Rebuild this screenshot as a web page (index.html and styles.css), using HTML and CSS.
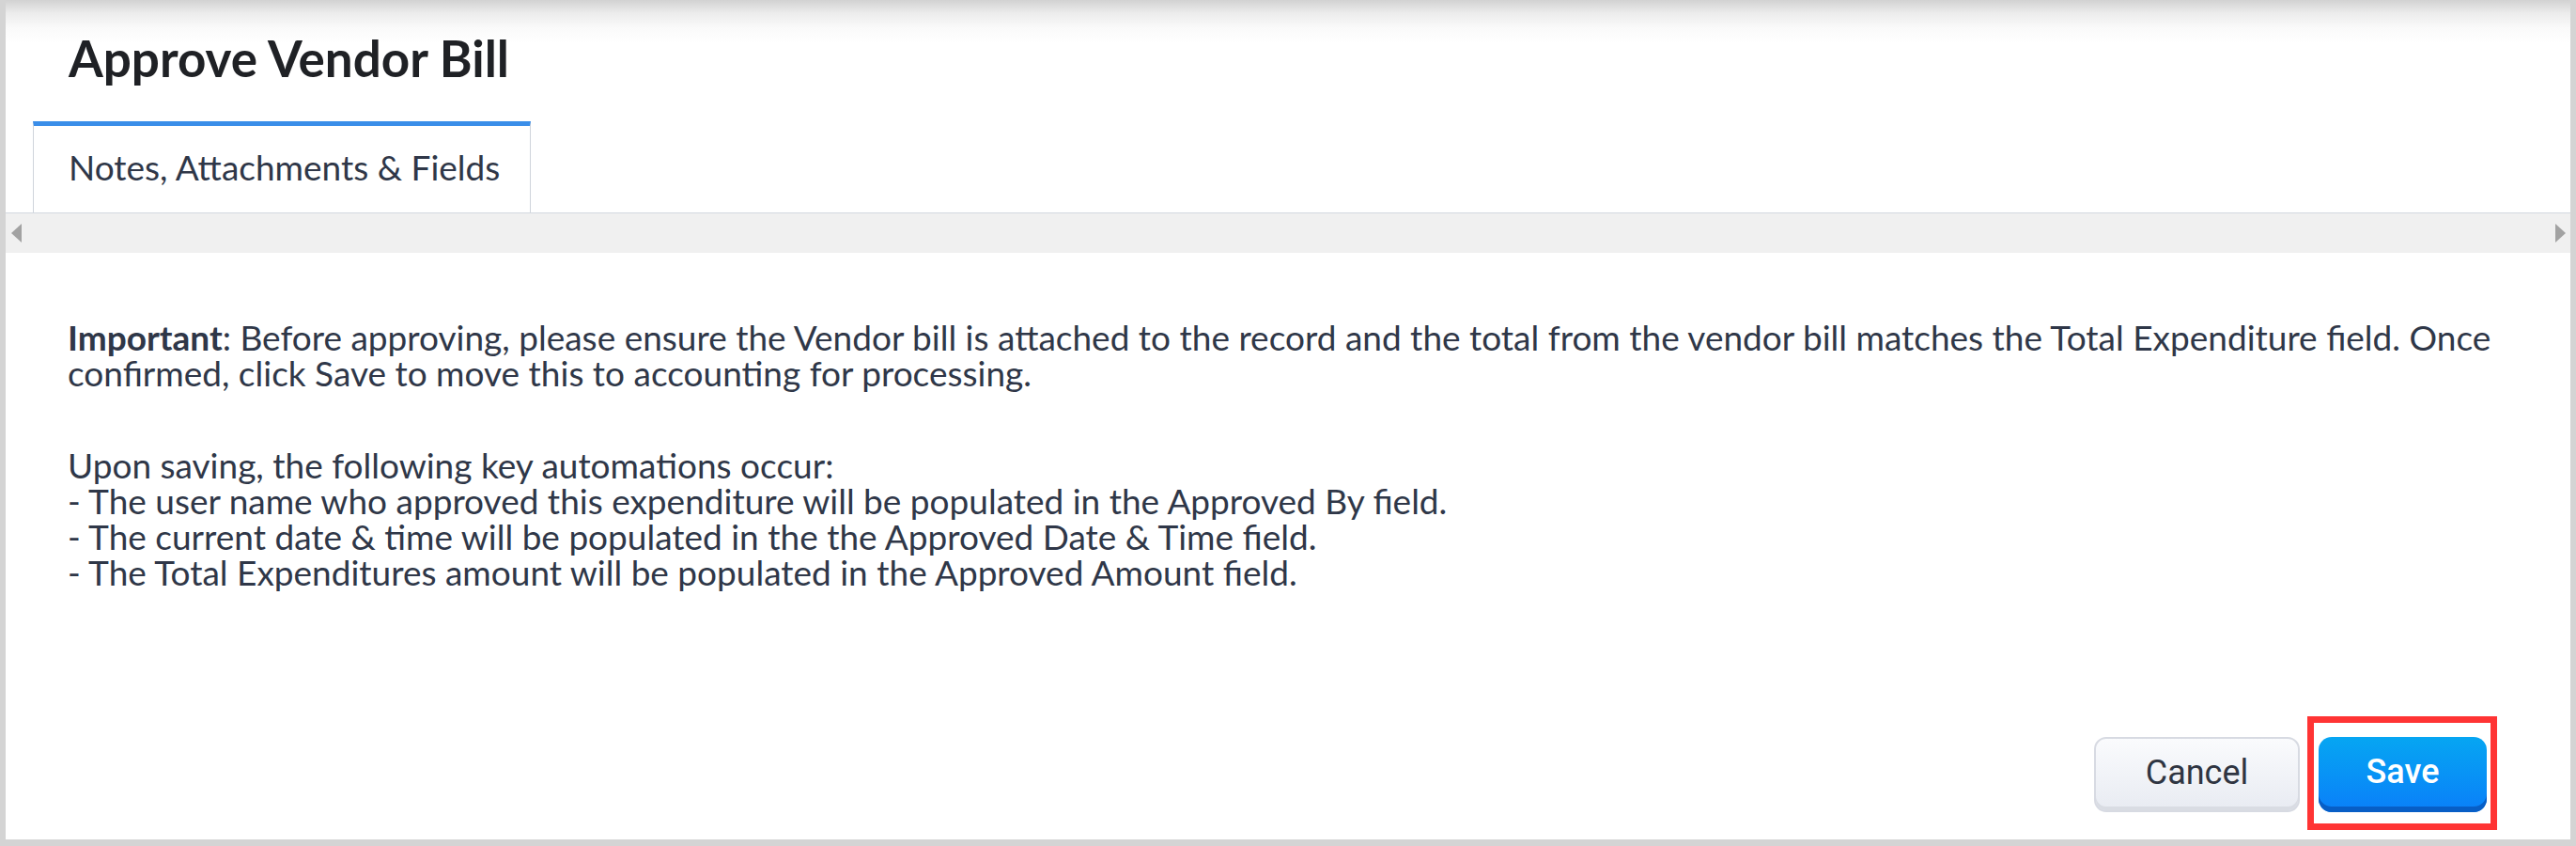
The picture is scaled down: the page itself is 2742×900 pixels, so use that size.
FILE: index.html
```html
<!DOCTYPE html>
<html lang="en">
<head>
<meta charset="utf-8">
<title>Approve Vendor Bill</title>
<link rel="stylesheet" href="styles.css">
</head>
<body>
<div class="frame">
  <div class="panel">
    <h1 class="title">Approve Vendor Bill</h1>
    <div class="tabs">
      <div class="tab">Notes, Attachments &amp; Fields</div>
    </div>
    <div class="scrollstrip">
      <span class="arrow arrow-left"></span>
      <span class="arrow arrow-right"></span>
    </div>
    <div class="content">
      <p class="para"><strong>Important</strong>: Before approving, please ensure the Vendor bill is attached to the record and the total from the vendor bill matches the Total Expenditure field. Once confirmed, click Save to move this to accounting for processing.</p>
      <p class="para para-list">Upon saving, the following key automations occur:<br>
- The user name who approved this expenditure will be populated in the Approved By field.<br>
- The current date &amp; time will be populated in the the Approved Date &amp; Time field.<br>
- The Total Expenditures amount will be populated in the Approved Amount field.</p>
    </div>
    <div class="actions">
      <button class="btn btn-cancel" type="button">Cancel</button>
      <span class="highlight"><button class="btn btn-save" type="button">Save</button></span>
    </div>
  </div>
</div>
</body>
</html>
```
FILE: styles.css
```css
html, body {
  margin: 0;
  padding: 0;
}
body {
  background: #d4d4d4;
  font-family: Lato, "Noto Sans", sans-serif;
}
.frame {
  width: 2742px;
  height: 900px;
  padding: 0 6px 7px 6px;
  box-sizing: border-box;
}
.panel {
  height: 893px;
  background: linear-gradient(#d2d2d2 0px, #ececec 14px, #fafafa 30px, #ffffff 46px);
  display: flex;
  flex-direction: column;
}
.title {
  margin: 32px 0 0 67px;
  font-size: 53px;
  line-height: 60px;
  font-weight: 700;
  color: #1f2125;
}
.tabs {
  margin-top: 37px;
  padding-left: 29px;
  display: flex;
}
.tab {
  width: 530px;
  box-sizing: border-box;
  height: 97px;
  border-top: 5px solid #3a8ee9;
  border-left: 1px solid #cfd4db;
  border-right: 1px solid #cfd4db;
  background: #fff;
  padding: 25px 0 0 37px;
  font-size: 37px;
  line-height: 38px;
  color: #2f3748;
  white-space: nowrap;
}
.scrollstrip {
  height: 43px;
  box-sizing: border-box;
  border-top: 1px solid #d3d8df;
  background: #f0f0f0;
  display: flex;
  justify-content: space-between;
  align-items: center;
  padding: 0 5px 0 6px;
}
.arrow {
  width: 0;
  height: 0;
  border-top: 10px solid transparent;
  border-bottom: 10px solid transparent;
}
.arrow-left {
  border-right: 11px solid #a2a2a2;
}
.arrow-right {
  border-left: 11px solid #a2a2a2;
}
.content {
  padding: 71px 72px 0 66px;
}
.para {
  margin: 0;
  font-size: 37px;
  line-height: 38px;
  color: #2f3748;
}
.para strong {
  font-weight: 700;
}
.para-list {
  margin-top: 60px;
}
.actions {
  margin-top: auto;
  margin-bottom: 29px;
  padding-right: 89px;
  display: flex;
  justify-content: flex-end;
  gap: 20px;
}
.btn {
  font-family: Roboto, "Liberation Sans", sans-serif;
  font-size: 36px;
  height: 80px;
  box-sizing: border-box;
  cursor: pointer;
  display: flex;
  align-items: center;
  justify-content: center;
}
.btn-cancel {
  width: 219px;
  color: #2f3542;
  background: linear-gradient(#fafbfd, #e8ebf2);
  border: 2px solid #d7dae2;
  border-radius: 13px;
  box-shadow: inset 0 -4px 0 #d9dce3;
  padding: 0 0 4px 0;
}
.highlight {
  position: relative;
  display: block;
}
.highlight::after {
  content: "";
  position: absolute;
  left: -12px;
  top: -22px;
  right: -11px;
  bottom: -19px;
  border: 7px solid #ff3434;
  pointer-events: none;
}
.btn-save {
  width: 179px;
  color: #ffffff;
  font-weight: 500;
  border: none;
  border-radius: 14px;
  background: linear-gradient(#06a6f2, #0a7ff9);
  box-shadow: inset 0 -6px 0 #075ec6;
  padding: 0 0 6px 0;
}
```
